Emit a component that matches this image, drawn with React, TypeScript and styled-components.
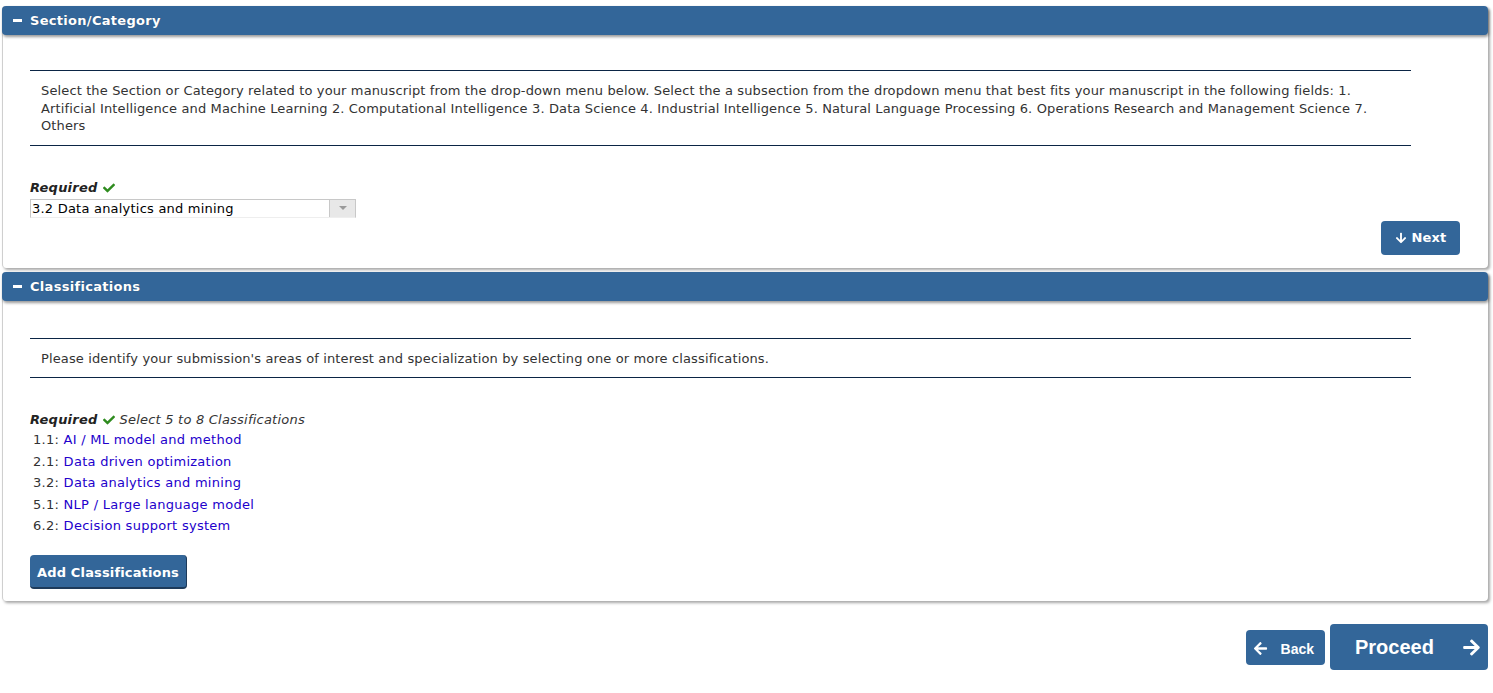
import React from "react";
import styled, { createGlobalStyle } from "styled-components";
import { FaCheck, FaArrowDown, FaArrowLeft, FaArrowRight } from "react-icons/fa";

const Global = createGlobalStyle`
  html, body { margin: 0; padding: 0; background: #fff; }
  body { font-family: "DejaVu Sans", Verdana, sans-serif; font-size: 13px; letter-spacing: 0.22px; color: #333; }
  * { box-sizing: border-box; }
`;

const Page = styled.div`
  display: flex;
  flex-direction: column;
  padding: 6px 5px 0 2px;
  gap: 4px;
`;

const Panel = styled.section`
  display: flex;
  flex-direction: column;
  background: #fff;
  border-radius: 4px;
  border-left: 1px solid #cfcfcf;
  box-shadow: 2px 2px 3px rgba(0, 0, 0, 0.35);
`;

const Header = styled.div`
  height: 29px;
  margin-left: -1px;
  display: flex;
  align-items: center;
  gap: 8px;
  padding-left: 11px;
  background: #336699;
  color: #fff;
  font-weight: bold;
  font-size: 13px;
  letter-spacing: 0.3px;
  border-radius: 4px;
  box-shadow: 1px 2px 3px rgba(0, 0, 0, 0.4);
  text-shadow: 0 0 1px rgba(0, 0, 0, 0.3);
`;

const Minus = styled.span`
  width: 9px;
  height: 3px;
  background: #fff;
  display: inline-block;
`;

const Body = styled.div<{ $top: number; $bottom: number }>`
  display: flex;
  flex-direction: column;
  padding: ${(p) => p.$top}px 28px ${(p) => p.$bottom}px 27px;
`;

const Instructions = styled.div`
  margin-right: 49px;
  border-top: 1px solid #0b2545;
  border-bottom: 1px solid #0b2545;
  padding: 11px 11px 10px;
  line-height: 17.5px;
  letter-spacing: 0.13px;
  color: #333;
`;

const Required = styled.div`
  margin-top: 33px;
  display: flex;
  align-items: center;
  gap: 5px;
  line-height: 18px;
  font-style: italic;
  color: #333;
  b { color: #222; }
`;

const Check = styled(FaCheck)`
  color: #2e8b1e;
  font-size: 12px;
`;

const Select = styled.div`
  margin-top: 2px;
  width: 326px;
  height: 19px;
  display: flex;
  border: 1px solid #c8c8c8;
  border-bottom-color: #eee;
  color: #000;
  background: #fff;
`;

const SelectValue = styled.span`
  flex: 1;
  padding-left: 1px;
  line-height: 17px;
`;

const SelectArrow = styled.span`
  width: 26px;
  background: #e8e8e8;
  border-left: 1px solid #c8c8c8;
  display: flex;
  align-items: center;
  justify-content: center;
  &::after {
    content: "";
    border-left: 4px solid transparent;
    border-right: 4px solid transparent;
    border-top: 4px solid #9a9a9a;
  }
`;

const Actions = styled.div`
  display: flex;
  justify-content: flex-end;
  margin-top: 3px;
`;

const BlueButton = styled.button<{ $w: number; $h: number }>`
  width: ${(p) => p.$w}px;
  height: ${(p) => p.$h}px;
  display: inline-flex;
  align-items: center;
  justify-content: center;
  gap: 5px;
  background: #336699;
  color: #fff;
  border: none;
  border-radius: 4px;
  font-family: "DejaVu Sans", Verdana, sans-serif;
  font-weight: bold;
  font-size: 13px;
  letter-spacing: 0.15px;
  padding: 0;
  cursor: pointer;
`;

const AddButton = styled(BlueButton)`
  border-bottom: 2px solid #1d3a5a;
  border-right: 1px solid #1d3a5a;
  padding-top: 3px;
  margin-top: 18px;
  align-self: flex-start;
`;

const ClassList = styled.ul`
  list-style: none;
  margin: 0;
  padding: 0 0 0 3px;
  display: flex;
  flex-direction: column;
`;

const ClassItem = styled.li`
  line-height: 21.5px;
  letter-spacing: 0.28px;
  color: #333;
  a { color: #2200cc; text-decoration: none; }
`;

const Footer = styled.div`
  display: flex;
  justify-content: flex-end;
  align-items: center;
  gap: 5px;
  margin-top: 19px;
`;

const NavButton = styled.button<{ $w: number; $h: number; $size: number }>`
  width: ${(p) => p.$w}px;
  height: ${(p) => p.$h}px;
  display: inline-flex;
  align-items: center;
  justify-content: space-between;
  background: #336699;
  color: #fff;
  border: none;
  border-radius: 4px;
  font-family: "Liberation Sans", Arial, sans-serif;
  font-weight: bold;
  font-size: ${(p) => p.$size}px;
  letter-spacing: 0;
  cursor: pointer;
`;

const BackButton = styled(NavButton)`
  margin-top: 2px;
  padding: 2px 11px 0 7px;
  svg { font-size: 15px; }
`;

const ProceedButton = styled(NavButton)`
  padding: 2px 7px 0 25px;
  svg { font-size: 19px; }
`;

const classifications = [
  ["1.1", "AI / ML model and method"],
  ["2.1", "Data driven optimization"],
  ["3.2", "Data analytics and mining"],
  ["5.1", "NLP / Large language model"],
  ["6.2", "Decision support system"],
];

export default function App() {
  return (
    <>
      <Global />
      <Page>
        <Panel>
          <Header>
            <Minus />
            Section/Category
          </Header>
          <Body $top={35} $bottom={13}>
            <Instructions>
              Select the Section or Category related to your manuscript from the drop-down menu below. Select the a
              subsection from the dropdown menu that best fits your manuscript in the following fields: 1. Artificial
              Intelligence and Machine Learning 2. Computational Intelligence 3. Data Science 4. Industrial Intelligence
              5. Natural Language Processing 6. Operations Research and Management Science 7. Others
            </Instructions>
            <Required>
              <b>Required</b>
              <Check />
            </Required>
            <Select>
              <SelectValue>3.2 Data analytics and mining</SelectValue>
              <SelectArrow />
            </Select>
            <Actions>
              <BlueButton $w={79} $h={34}>
                <FaArrowDown size={12} />
                Next
              </BlueButton>
            </Actions>
          </Body>
        </Panel>
        <Panel>
          <Header>
            <Minus />
            Classifications
          </Header>
          <Body $top={37} $bottom={12}>
            <Instructions>
              Please identify your submission's areas of interest and specialization by selecting one or more
              classifications.
            </Instructions>
            <Required>
              <b>Required</b>
              <Check />
              <span>Select 5 to 8 Classifications</span>
            </Required>
            <ClassList>
              {classifications.map(([code, label]) => (
                <ClassItem key={code}>
                  {code}: <a href="#">{label}</a>
                </ClassItem>
              ))}
            </ClassList>
            <AddButton $w={157} $h={34}>Add Classifications</AddButton>
          </Body>
        </Panel>
        <Footer>
          <BackButton $w={79} $h={35} $size={14}>
            <FaArrowLeft />
            Back
          </BackButton>
          <ProceedButton $w={158} $h={46} $size={20}>
            Proceed
            <FaArrowRight />
          </ProceedButton>
        </Footer>
      </Page>
    </>
  );
}
